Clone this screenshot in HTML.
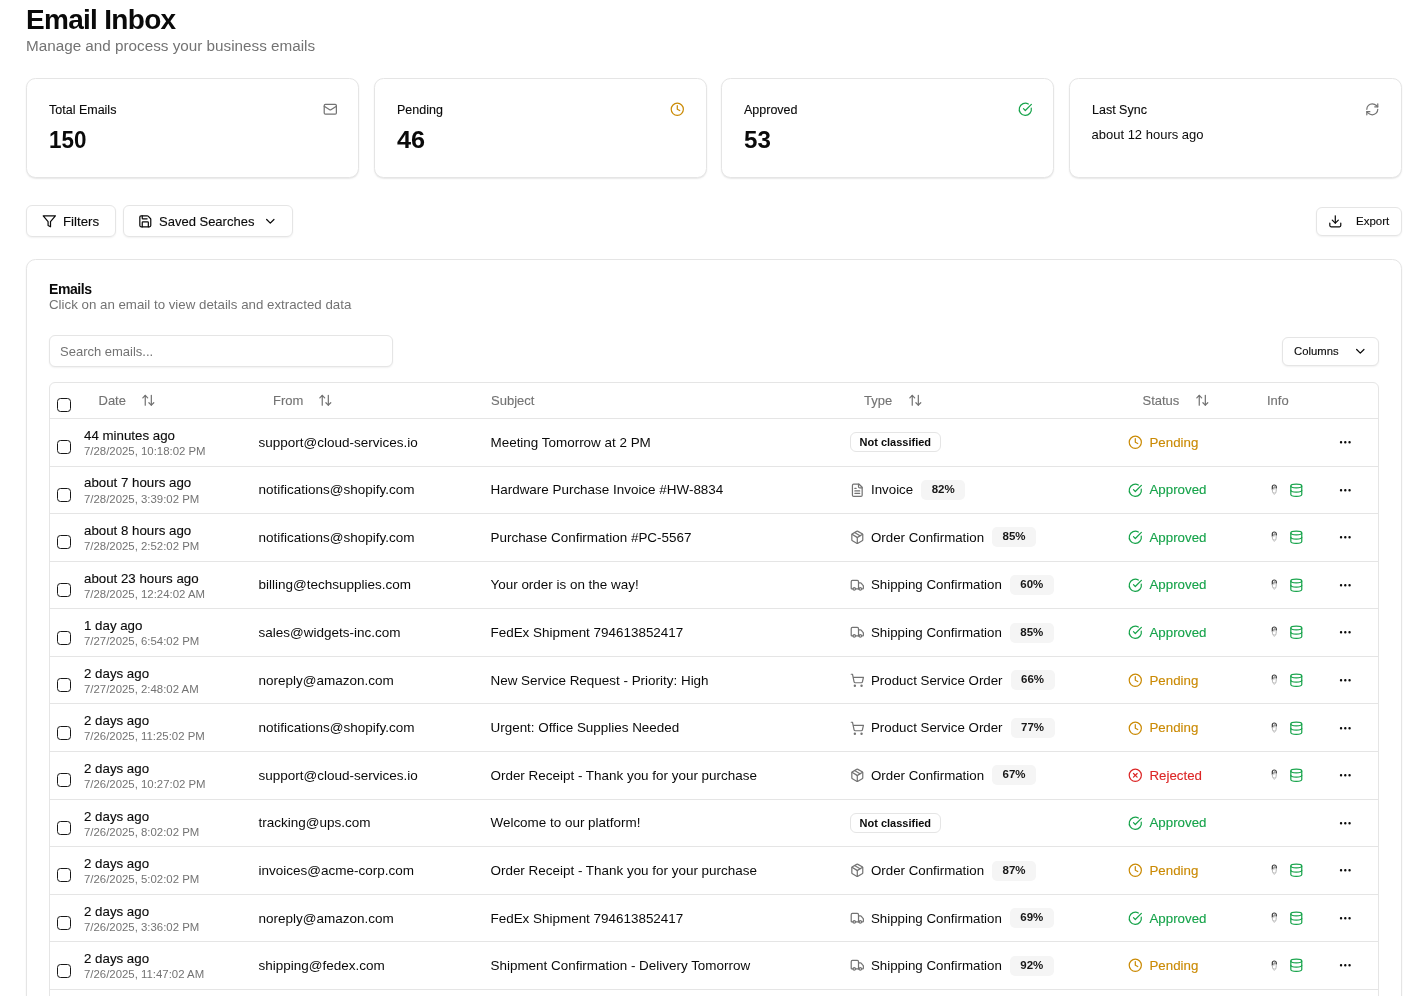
<!DOCTYPE html>
<html><head><meta charset="utf-8"><title>Email Inbox</title>
<style>
html,body{margin:0;padding:0;background:#ffffff;width:1415px;height:996px;overflow:hidden;}
body{position:relative;font-family:"Liberation Sans", sans-serif;}
#w{position:absolute;left:0;top:0;width:1415px;height:996px;overflow:hidden;will-change:transform;}
.t{position:absolute;white-space:nowrap;}
.m{-webkit-text-stroke:0.12px currentColor;}
.i{position:absolute;display:block;overflow:visible;}
.b{position:absolute;box-sizing:border-box;}
.card{position:absolute;box-sizing:border-box;border:1px solid #e5e5e5;border-radius:9.5px;background:#fff;box-shadow:0 1px 2px rgba(0,0,0,0.07),0 1px 1px rgba(0,0,0,0.03);}
.btn{position:absolute;box-sizing:border-box;border:1px solid #e5e5e5;border-radius:6px;background:#fff;box-shadow:0 1px 2px rgba(0,0,0,0.06);}
.cb{position:absolute;box-sizing:border-box;width:14px;height:14px;border:1px solid #171717;border-radius:3.5px;background:#fff;}
.hl{position:absolute;left:50px;width:1328px;height:1px;background:#e5e5e5;}
.pct{position:absolute;box-sizing:border-box;height:20px;line-height:18px;padding:0 10.5px;border-radius:5px;background:#f5f5f5;font-size:11.5px;font-weight:700;color:#171717;}
</style></head><body><div id="w">

<div class="t " style="left:26px;top:6px;font-size:28px;line-height:28px;color:#0a0a0a;font-weight:700;letter-spacing:-0.7px;">Email Inbox</div>
<div class="t " style="left:26px;top:38px;font-size:15.25px;line-height:15.25px;color:#737373;">Manage and process your business emails</div>
<div class="card" style="left:26px;top:78px;width:333px;height:100px"></div>
<div class="t m" style="left:49px;top:104px;font-size:12.5px;line-height:12.5px;color:#0a0a0a;">Total Emails</div>
<div class="t " style="left:49px;top:129px;font-size:23px;line-height:23px;color:#0a0a0a;font-weight:700;transform-origin:0 0;transform:scaleX(0.975);">150</div>
<svg class="i" style="left:323px;top:102px;width:14.6px;height:14.6px" viewBox="0 0 24 24" fill="none" stroke="#737373" stroke-width="2" stroke-linecap="round" stroke-linejoin="round"><rect width="20" height="16" x="2" y="4" rx="2"/><path d="m22 7-8.97 5.7a1.94 1.94 0 0 1-2.06 0L2 7"/></svg>
<div class="card" style="left:374px;top:78px;width:333px;height:100px"></div>
<div class="t m" style="left:397px;top:104px;font-size:12.5px;line-height:12.5px;color:#0a0a0a;">Pending</div>
<div class="t " style="left:397px;top:129px;font-size:23px;line-height:23px;color:#0a0a0a;font-weight:700;transform-origin:0 0;transform:scaleX(1.1);">46</div>
<svg class="i" style="left:670px;top:102px;width:14.6px;height:14.6px" viewBox="0 0 24 24" fill="none" stroke="#ca8a04" stroke-width="2" stroke-linecap="round" stroke-linejoin="round"><circle cx="12" cy="12" r="10"/><polyline points="12 6 12 12 16 14"/></svg>
<div class="card" style="left:721px;top:78px;width:333px;height:100px"></div>
<div class="t m" style="left:744px;top:104px;font-size:12.5px;line-height:12.5px;color:#0a0a0a;">Approved</div>
<div class="t " style="left:744px;top:129px;font-size:23px;line-height:23px;color:#0a0a0a;font-weight:700;transform-origin:0 0;transform:scaleX(1.05);">53</div>
<svg class="i" style="left:1017.6px;top:102px;width:14.6px;height:14.6px" viewBox="0 0 24 24" fill="none" stroke="#16a34a" stroke-width="2" stroke-linecap="round" stroke-linejoin="round"><path d="M21.801 10A10 10 0 1 1 17 3.335"/><path d="m9 11 3 3L22 4"/></svg>
<div class="card" style="left:1069px;top:78px;width:333px;height:100px"></div>
<div class="t m" style="left:1092px;top:104px;font-size:12.5px;line-height:12.5px;color:#0a0a0a;">Last Sync</div>
<div class="t " style="left:1091.5px;top:128px;font-size:13px;line-height:13px;color:#0a0a0a;">about 12 hours ago</div>
<svg class="i" style="left:1364.5px;top:101.5px;width:14.6px;height:14.6px" viewBox="0 0 24 24" fill="none" stroke="#737373" stroke-width="2" stroke-linecap="round" stroke-linejoin="round"><path d="M3 12a9 9 0 0 1 9-9 9.75 9.75 0 0 1 6.74 2.74L21 8"/><path d="M21 3v5h-5"/><path d="M21 12a9 9 0 0 1-9 9 9.75 9.75 0 0 1-6.74-2.74L3 16"/><path d="M8 16H3v5"/></svg>
<div class="btn" style="left:26px;top:205px;width:90px;height:32px"></div>
<svg class="i" style="left:42px;top:214px;width:14.6px;height:14.6px" viewBox="0 0 24 24" fill="none" stroke="#0a0a0a" stroke-width="2" stroke-linecap="round" stroke-linejoin="round"><polygon points="22 3 2 3 10 12.46 10 19 14 21 14 12.46 22 3"/></svg>
<div class="t m" style="left:63px;top:215px;font-size:13.3px;line-height:13.3px;color:#0a0a0a;">Filters</div>
<div class="btn" style="left:123px;top:205px;width:170px;height:32px"></div>
<svg class="i" style="left:138px;top:214px;width:14.6px;height:14.6px" viewBox="0 0 24 24" fill="none" stroke="#0a0a0a" stroke-width="2" stroke-linecap="round" stroke-linejoin="round"><path d="M15.2 3a2 2 0 0 1 1.4.6l3.8 3.8a2 2 0 0 1 .6 1.4V19a2 2 0 0 1-2 2H5a2 2 0 0 1-2-2V5a2 2 0 0 1 2-2z"/><path d="M17 21v-7a1 1 0 0 0-1-1H8a1 1 0 0 0-1 1v7"/><path d="M7 3v4a1 1 0 0 0 1 1h7"/></svg>
<div class="t m" style="left:159px;top:215px;font-size:13px;line-height:13px;color:#0a0a0a;">Saved Searches</div>
<svg class="i" style="left:263px;top:214px;width:14.6px;height:14.6px" viewBox="0 0 24 24" fill="none" stroke="#0a0a0a" stroke-width="2" stroke-linecap="round" stroke-linejoin="round"><path d="m6 9 6 6 6-6"/></svg>
<div class="btn" style="left:1316px;top:207px;width:86px;height:29px"></div>
<svg class="i" style="left:1328px;top:214px;width:14.6px;height:14.6px" viewBox="0 0 24 24" fill="none" stroke="#0a0a0a" stroke-width="2" stroke-linecap="round" stroke-linejoin="round"><path d="M21 15v4a2 2 0 0 1-2 2H5a2 2 0 0 1-2-2v-4"/><polyline points="7 10 12 15 17 10"/><line x1="12" x2="12" y1="15" y2="3"/></svg>
<div class="t m" style="left:1356px;top:216px;font-size:11.5px;line-height:11.5px;color:#0a0a0a;">Export</div>
<div class="card" style="left:26px;top:259px;width:1376px;height:800px"></div>
<div class="t " style="left:49px;top:282px;font-size:14px;line-height:14px;color:#0a0a0a;font-weight:700;letter-spacing:-0.4px;">Emails</div>
<div class="t " style="left:49px;top:298px;font-size:13.3px;line-height:13.3px;color:#737373;">Click on an email to view details and extracted data</div>
<div class="btn" style="left:49px;top:335px;width:344px;height:32px"></div>
<div class="t " style="left:60px;top:345px;font-size:13px;line-height:13px;color:#737373;">Search emails...</div>
<div class="btn" style="left:1282px;top:337px;width:97px;height:29px"></div>
<div class="t m" style="left:1294px;top:346px;font-size:11.3px;line-height:11.3px;color:#0a0a0a;">Columns</div>
<svg class="i" style="left:1353px;top:344px;width:14.6px;height:14.6px" viewBox="0 0 24 24" fill="none" stroke="#0a0a0a" stroke-width="2" stroke-linecap="round" stroke-linejoin="round"><path d="m6 9 6 6 6-6"/></svg>
<div class="b" style="left:49px;top:382px;width:1330px;height:700px;border:1px solid #e5e5e5;border-radius:6px"></div>
<div class="cb" style="left:57px;top:398px"></div>
<div class="t m" style="left:98.5px;top:394px;font-size:13px;line-height:13px;color:#737373;">Date</div>
<svg class="i" style="left:141px;top:393px;width:14.6px;height:14.6px" viewBox="0 0 24 24" fill="none" stroke="#737373" stroke-width="2" stroke-linecap="round" stroke-linejoin="round"><path d="m21 16-4 4-4-4"/><path d="M17 20V4"/><path d="m3 8 4-4 4 4"/><path d="M7 4v16"/></svg>
<div class="t m" style="left:273px;top:394px;font-size:13px;line-height:13px;color:#737373;">From</div>
<svg class="i" style="left:317.7px;top:393px;width:14.6px;height:14.6px" viewBox="0 0 24 24" fill="none" stroke="#737373" stroke-width="2" stroke-linecap="round" stroke-linejoin="round"><path d="m21 16-4 4-4-4"/><path d="M17 20V4"/><path d="m3 8 4-4 4 4"/><path d="M7 4v16"/></svg>
<div class="t m" style="left:491px;top:394px;font-size:13px;line-height:13px;color:#737373;">Subject</div>
<div class="t m" style="left:864px;top:394px;font-size:13px;line-height:13px;color:#737373;">Type</div>
<svg class="i" style="left:907.8px;top:393px;width:14.6px;height:14.6px" viewBox="0 0 24 24" fill="none" stroke="#737373" stroke-width="2" stroke-linecap="round" stroke-linejoin="round"><path d="m21 16-4 4-4-4"/><path d="M17 20V4"/><path d="m3 8 4-4 4 4"/><path d="M7 4v16"/></svg>
<div class="t m" style="left:1142.5px;top:394px;font-size:13px;line-height:13px;color:#737373;">Status</div>
<svg class="i" style="left:1194.7px;top:393px;width:14.6px;height:14.6px" viewBox="0 0 24 24" fill="none" stroke="#737373" stroke-width="2" stroke-linecap="round" stroke-linejoin="round"><path d="m21 16-4 4-4-4"/><path d="M17 20V4"/><path d="m3 8 4-4 4 4"/><path d="M7 4v16"/></svg>
<div class="t m" style="left:1267px;top:394px;font-size:13px;line-height:13px;color:#737373;">Info</div>
<div class="hl" style="top:418px"></div>
<div class="cb" style="top:440px;left:57px"></div>
<div class="t m" style="left:84px;top:429px;font-size:13.3px;line-height:13.3px;color:#0a0a0a;">44 minutes ago</div>
<div class="t " style="left:84px;top:446px;font-size:11.4px;line-height:11.4px;color:#737373;">7/28/2025, 10:18:02 PM</div>
<div class="t " style="left:258.5px;top:436px;font-size:13.5px;line-height:13.5px;color:#0a0a0a;">support@cloud-services.io</div>
<div class="t " style="left:490.5px;top:436px;font-size:13.45px;line-height:13.45px;color:#0a0a0a;">Meeting Tomorrow at 2 PM</div>
<div class="b" style="left:850px;top:432px;width:91px;height:20px;border:1px solid #e5e5e5;border-radius:6px"></div>
<div class="t " style="left:859.5px;top:437px;font-size:11px;line-height:11px;color:#0a0a0a;font-weight:700;">Not classified</div>
<svg class="i" style="left:1127.8px;top:435.0px;width:14.6px;height:14.6px" viewBox="0 0 24 24" fill="none" stroke="#ca8a04" stroke-width="2" stroke-linecap="round" stroke-linejoin="round"><circle cx="12" cy="12" r="10"/><polyline points="12 6 12 12 16 14"/></svg>
<div class="t m" style="left:1149.5px;top:436px;font-size:13.3px;line-height:13.3px;color:#ca8a04;">Pending</div>
<svg class="i" style="left:1337.7px;top:435.0px;width:14.6px;height:14.6px" viewBox="0 0 24 24" fill="#0a0a0a" stroke="#0a0a0a" stroke-width="2"><circle cx="12" cy="12" r="1"/><circle cx="19" cy="12" r="1"/><circle cx="5" cy="12" r="1"/></svg>
<div class="hl" style="top:466px"></div>
<div class="cb" style="top:488px;left:57px"></div>
<div class="t m" style="left:84px;top:476px;font-size:13.3px;line-height:13.3px;color:#0a0a0a;">about 7 hours ago</div>
<div class="t " style="left:84px;top:494px;font-size:11.4px;line-height:11.4px;color:#737373;">7/28/2025, 3:39:02 PM</div>
<div class="t " style="left:258.5px;top:483px;font-size:13.5px;line-height:13.5px;color:#0a0a0a;">notifications@shopify.com</div>
<div class="t " style="left:490.5px;top:483px;font-size:13.45px;line-height:13.45px;color:#0a0a0a;">Hardware Purchase Invoice #HW-8834</div>
<svg class="i" style="left:850px;top:482.6px;width:14.6px;height:14.6px" viewBox="0 0 24 24" fill="none" stroke="#737373" stroke-width="2" stroke-linecap="round" stroke-linejoin="round"><path d="M15 2H6a2 2 0 0 0-2 2v16a2 2 0 0 0 2 2h12a2 2 0 0 0 2-2V7Z"/><path d="M14 2v4a2 2 0 0 0 2 2h4"/><path d="M10 9H8"/><path d="M16 13H8"/><path d="M16 17H8"/></svg>
<div class="t" style="left:871px;top:483px;font-size:13.3px;line-height:13.3px;color:#0a0a0a">Invoice<span class="pct" style="left:100%;margin-left:8px;top:-3.13px">82%</span></div>
<svg class="i" style="left:1127.8px;top:482.6px;width:14.6px;height:14.6px" viewBox="0 0 24 24" fill="none" stroke="#16a34a" stroke-width="2" stroke-linecap="round" stroke-linejoin="round"><path d="M21.801 10A10 10 0 1 1 17 3.335"/><path d="m9 11 3 3L22 4"/></svg>
<div class="t m" style="left:1149.5px;top:483px;font-size:13.3px;line-height:13.3px;color:#16a34a;">Approved</div>
<svg class="i" style="left:1288.8px;top:482.6px;width:14.6px;height:14.6px" viewBox="0 0 24 24" fill="none" stroke="#16a34a" stroke-width="2" stroke-linecap="round" stroke-linejoin="round"><ellipse cx="12" cy="5" rx="9" ry="3"/><path d="M3 5V19A9 3 0 0 0 21 19V5"/><path d="M3 12A9 3 0 0 0 21 12"/></svg>
<svg class="i" style="left:1337.7px;top:482.6px;width:14.6px;height:14.6px" viewBox="0 0 24 24" fill="#0a0a0a" stroke="#0a0a0a" stroke-width="2"><circle cx="12" cy="12" r="1"/><circle cx="19" cy="12" r="1"/><circle cx="5" cy="12" r="1"/></svg>
<svg class="i" style="left:1271px;top:483.7px;width:7px;height:12px" viewBox="0 0 7 12" fill="none" stroke-linecap="round" stroke-linejoin="round"><path d="M1.3 5.2 V3 A2 2 0 0 1 5.3 3 V4.2" stroke="#3a3a3a" stroke-width="1.2"/><path d="M2.9 5 V3.4 A0.6 0.6 0 0 1 4.1 3.4" stroke="#666" stroke-width="0.9"/><path d="M1.4 5.4 V7.2 A1.9 1.9 0 0 0 5.2 7.2 V4.6" stroke="#b5b5b5" stroke-width="1"/><path d="M1.8 8.8 L3.3 10.6 L4.8 8.8" stroke="#c8c8c8" stroke-width="0.9"/></svg>
<div class="hl" style="top:513px"></div>
<div class="cb" style="top:535px;left:57px"></div>
<div class="t m" style="left:84px;top:524px;font-size:13.3px;line-height:13.3px;color:#0a0a0a;">about 8 hours ago</div>
<div class="t " style="left:84px;top:541px;font-size:11.4px;line-height:11.4px;color:#737373;">7/28/2025, 2:52:02 PM</div>
<div class="t " style="left:258.5px;top:531px;font-size:13.5px;line-height:13.5px;color:#0a0a0a;">notifications@shopify.com</div>
<div class="t " style="left:490.5px;top:531px;font-size:13.45px;line-height:13.45px;color:#0a0a0a;">Purchase Confirmation #PC-5567</div>
<svg class="i" style="left:850px;top:530.1px;width:14.6px;height:14.6px" viewBox="0 0 24 24" fill="none" stroke="#737373" stroke-width="2" stroke-linecap="round" stroke-linejoin="round"><path d="M11 21.73a2 2 0 0 0 2 0l7-4A2 2 0 0 0 21 16V8a2 2 0 0 0-1-1.73l-7-4a2 2 0 0 0-2 0l-7 4A2 2 0 0 0 3 8v8a2 2 0 0 0 1 1.730z"/><path d="M12 22V12"/><path d="m3.3 7 7.703 4.734a2 2 0 0 0 1.994 0L20.7 7"/><path d="m7.5 4.27 9 5.15"/></svg>
<div class="t" style="left:871px;top:531px;font-size:13.3px;line-height:13.3px;color:#0a0a0a">Order Confirmation<span class="pct" style="left:100%;margin-left:8px;top:-3.55px">85%</span></div>
<svg class="i" style="left:1127.8px;top:530.1px;width:14.6px;height:14.6px" viewBox="0 0 24 24" fill="none" stroke="#16a34a" stroke-width="2" stroke-linecap="round" stroke-linejoin="round"><path d="M21.801 10A10 10 0 1 1 17 3.335"/><path d="m9 11 3 3L22 4"/></svg>
<div class="t m" style="left:1149.5px;top:531px;font-size:13.3px;line-height:13.3px;color:#16a34a;">Approved</div>
<svg class="i" style="left:1288.8px;top:530.1px;width:14.6px;height:14.6px" viewBox="0 0 24 24" fill="none" stroke="#16a34a" stroke-width="2" stroke-linecap="round" stroke-linejoin="round"><ellipse cx="12" cy="5" rx="9" ry="3"/><path d="M3 5V19A9 3 0 0 0 21 19V5"/><path d="M3 12A9 3 0 0 0 21 12"/></svg>
<svg class="i" style="left:1337.7px;top:530.1px;width:14.6px;height:14.6px" viewBox="0 0 24 24" fill="#0a0a0a" stroke="#0a0a0a" stroke-width="2"><circle cx="12" cy="12" r="1"/><circle cx="19" cy="12" r="1"/><circle cx="5" cy="12" r="1"/></svg>
<svg class="i" style="left:1271px;top:531.2px;width:7px;height:12px" viewBox="0 0 7 12" fill="none" stroke-linecap="round" stroke-linejoin="round"><path d="M1.3 5.2 V3 A2 2 0 0 1 5.3 3 V4.2" stroke="#3a3a3a" stroke-width="1.2"/><path d="M2.9 5 V3.4 A0.6 0.6 0 0 1 4.1 3.4" stroke="#666" stroke-width="0.9"/><path d="M1.4 5.4 V7.2 A1.9 1.9 0 0 0 5.2 7.2 V4.6" stroke="#b5b5b5" stroke-width="1"/><path d="M1.8 8.8 L3.3 10.6 L4.8 8.8" stroke="#c8c8c8" stroke-width="0.9"/></svg>
<div class="hl" style="top:561px"></div>
<div class="cb" style="top:583px;left:57px"></div>
<div class="t m" style="left:84px;top:572px;font-size:13.3px;line-height:13.3px;color:#0a0a0a;">about 23 hours ago</div>
<div class="t " style="left:84px;top:589px;font-size:11.4px;line-height:11.4px;color:#737373;">7/28/2025, 12:24:02 AM</div>
<div class="t " style="left:258.5px;top:578px;font-size:13.5px;line-height:13.5px;color:#0a0a0a;">billing@techsupplies.com</div>
<div class="t " style="left:490.5px;top:578px;font-size:13.45px;line-height:13.45px;color:#0a0a0a;">Your order is on the way!</div>
<svg class="i" style="left:850px;top:577.7px;width:14.6px;height:14.6px" viewBox="0 0 24 24" fill="none" stroke="#737373" stroke-width="2" stroke-linecap="round" stroke-linejoin="round"><path d="M14 18V6a2 2 0 0 0-2-2H4a2 2 0 0 0-2 2v11a1 1 0 0 0 1 1h2"/><path d="M15 18H9"/><path d="M19 18h2a1 1 0 0 0 1-1v-3.650a1 1 0 0 0-.22-.624l-3.48-4.35A1 1 0 0 0 17.52 8H14"/><circle cx="17" cy="18" r="2"/><circle cx="7" cy="18" r="2"/></svg>
<div class="t" style="left:871px;top:578px;font-size:13.3px;line-height:13.3px;color:#0a0a0a">Shipping Confirmation<span class="pct" style="left:100%;margin-left:8px;top:-2.97px">60%</span></div>
<svg class="i" style="left:1127.8px;top:577.7px;width:14.6px;height:14.6px" viewBox="0 0 24 24" fill="none" stroke="#16a34a" stroke-width="2" stroke-linecap="round" stroke-linejoin="round"><path d="M21.801 10A10 10 0 1 1 17 3.335"/><path d="m9 11 3 3L22 4"/></svg>
<div class="t m" style="left:1149.5px;top:578px;font-size:13.3px;line-height:13.3px;color:#16a34a;">Approved</div>
<svg class="i" style="left:1288.8px;top:577.7px;width:14.6px;height:14.6px" viewBox="0 0 24 24" fill="none" stroke="#16a34a" stroke-width="2" stroke-linecap="round" stroke-linejoin="round"><ellipse cx="12" cy="5" rx="9" ry="3"/><path d="M3 5V19A9 3 0 0 0 21 19V5"/><path d="M3 12A9 3 0 0 0 21 12"/></svg>
<svg class="i" style="left:1337.7px;top:577.7px;width:14.6px;height:14.6px" viewBox="0 0 24 24" fill="#0a0a0a" stroke="#0a0a0a" stroke-width="2"><circle cx="12" cy="12" r="1"/><circle cx="19" cy="12" r="1"/><circle cx="5" cy="12" r="1"/></svg>
<svg class="i" style="left:1271px;top:578.8px;width:7px;height:12px" viewBox="0 0 7 12" fill="none" stroke-linecap="round" stroke-linejoin="round"><path d="M1.3 5.2 V3 A2 2 0 0 1 5.3 3 V4.2" stroke="#3a3a3a" stroke-width="1.2"/><path d="M2.9 5 V3.4 A0.6 0.6 0 0 1 4.1 3.4" stroke="#666" stroke-width="0.9"/><path d="M1.4 5.4 V7.2 A1.9 1.9 0 0 0 5.2 7.2 V4.6" stroke="#b5b5b5" stroke-width="1"/><path d="M1.8 8.8 L3.3 10.6 L4.8 8.8" stroke="#c8c8c8" stroke-width="0.9"/></svg>
<div class="hl" style="top:608px"></div>
<div class="cb" style="top:631px;left:57px"></div>
<div class="t m" style="left:84px;top:619px;font-size:13.3px;line-height:13.3px;color:#0a0a0a;">1 day ago</div>
<div class="t " style="left:84px;top:636px;font-size:11.4px;line-height:11.4px;color:#737373;">7/27/2025, 6:54:02 PM</div>
<div class="t " style="left:258.5px;top:626px;font-size:13.5px;line-height:13.5px;color:#0a0a0a;">sales@widgets-inc.com</div>
<div class="t " style="left:490.5px;top:626px;font-size:13.45px;line-height:13.45px;color:#0a0a0a;">FedEx Shipment 794613852417</div>
<svg class="i" style="left:850px;top:625.3px;width:14.6px;height:14.6px" viewBox="0 0 24 24" fill="none" stroke="#737373" stroke-width="2" stroke-linecap="round" stroke-linejoin="round"><path d="M14 18V6a2 2 0 0 0-2-2H4a2 2 0 0 0-2 2v11a1 1 0 0 0 1 1h2"/><path d="M15 18H9"/><path d="M19 18h2a1 1 0 0 0 1-1v-3.650a1 1 0 0 0-.22-.624l-3.48-4.35A1 1 0 0 0 17.52 8H14"/><circle cx="17" cy="18" r="2"/><circle cx="7" cy="18" r="2"/></svg>
<div class="t" style="left:871px;top:626px;font-size:13.3px;line-height:13.3px;color:#0a0a0a">Shipping Confirmation<span class="pct" style="left:100%;margin-left:8px;top:-3.39px">85%</span></div>
<svg class="i" style="left:1127.8px;top:625.3px;width:14.6px;height:14.6px" viewBox="0 0 24 24" fill="none" stroke="#16a34a" stroke-width="2" stroke-linecap="round" stroke-linejoin="round"><path d="M21.801 10A10 10 0 1 1 17 3.335"/><path d="m9 11 3 3L22 4"/></svg>
<div class="t m" style="left:1149.5px;top:626px;font-size:13.3px;line-height:13.3px;color:#16a34a;">Approved</div>
<svg class="i" style="left:1288.8px;top:625.3px;width:14.6px;height:14.6px" viewBox="0 0 24 24" fill="none" stroke="#16a34a" stroke-width="2" stroke-linecap="round" stroke-linejoin="round"><ellipse cx="12" cy="5" rx="9" ry="3"/><path d="M3 5V19A9 3 0 0 0 21 19V5"/><path d="M3 12A9 3 0 0 0 21 12"/></svg>
<svg class="i" style="left:1337.7px;top:625.3px;width:14.6px;height:14.6px" viewBox="0 0 24 24" fill="#0a0a0a" stroke="#0a0a0a" stroke-width="2"><circle cx="12" cy="12" r="1"/><circle cx="19" cy="12" r="1"/><circle cx="5" cy="12" r="1"/></svg>
<svg class="i" style="left:1271px;top:626.4px;width:7px;height:12px" viewBox="0 0 7 12" fill="none" stroke-linecap="round" stroke-linejoin="round"><path d="M1.3 5.2 V3 A2 2 0 0 1 5.3 3 V4.2" stroke="#3a3a3a" stroke-width="1.2"/><path d="M2.9 5 V3.4 A0.6 0.6 0 0 1 4.1 3.4" stroke="#666" stroke-width="0.9"/><path d="M1.4 5.4 V7.2 A1.9 1.9 0 0 0 5.2 7.2 V4.6" stroke="#b5b5b5" stroke-width="1"/><path d="M1.8 8.8 L3.3 10.6 L4.8 8.8" stroke="#c8c8c8" stroke-width="0.9"/></svg>
<div class="hl" style="top:656px"></div>
<div class="cb" style="top:678px;left:57px"></div>
<div class="t m" style="left:84px;top:667px;font-size:13.3px;line-height:13.3px;color:#0a0a0a;">2 days ago</div>
<div class="t " style="left:84px;top:684px;font-size:11.4px;line-height:11.4px;color:#737373;">7/27/2025, 2:48:02 AM</div>
<div class="t " style="left:258.5px;top:674px;font-size:13.5px;line-height:13.5px;color:#0a0a0a;">noreply@amazon.com</div>
<div class="t " style="left:490.5px;top:674px;font-size:13.45px;line-height:13.45px;color:#0a0a0a;">New Service Request - Priority: High</div>
<svg class="i" style="left:850px;top:672.9px;width:14.6px;height:14.6px" viewBox="0 0 24 24" fill="none" stroke="#737373" stroke-width="2" stroke-linecap="round" stroke-linejoin="round"><circle cx="8" cy="21" r="1"/><circle cx="19" cy="21" r="1"/><path d="M2.05 2.05h2l2.66 12.42a2 2 0 0 0 2 1.58h9.78a2 2 0 0 0 1.95-1.57l1.65-7.43H5.12"/></svg>
<div class="t" style="left:871px;top:674px;font-size:13.3px;line-height:13.3px;color:#0a0a0a">Product Service Order<span class="pct" style="left:100%;margin-left:8px;top:-3.81px">66%</span></div>
<svg class="i" style="left:1127.8px;top:672.9px;width:14.6px;height:14.6px" viewBox="0 0 24 24" fill="none" stroke="#ca8a04" stroke-width="2" stroke-linecap="round" stroke-linejoin="round"><circle cx="12" cy="12" r="10"/><polyline points="12 6 12 12 16 14"/></svg>
<div class="t m" style="left:1149.5px;top:674px;font-size:13.3px;line-height:13.3px;color:#ca8a04;">Pending</div>
<svg class="i" style="left:1288.8px;top:672.9px;width:14.6px;height:14.6px" viewBox="0 0 24 24" fill="none" stroke="#16a34a" stroke-width="2" stroke-linecap="round" stroke-linejoin="round"><ellipse cx="12" cy="5" rx="9" ry="3"/><path d="M3 5V19A9 3 0 0 0 21 19V5"/><path d="M3 12A9 3 0 0 0 21 12"/></svg>
<svg class="i" style="left:1337.7px;top:672.9px;width:14.6px;height:14.6px" viewBox="0 0 24 24" fill="#0a0a0a" stroke="#0a0a0a" stroke-width="2"><circle cx="12" cy="12" r="1"/><circle cx="19" cy="12" r="1"/><circle cx="5" cy="12" r="1"/></svg>
<svg class="i" style="left:1271px;top:674.0px;width:7px;height:12px" viewBox="0 0 7 12" fill="none" stroke-linecap="round" stroke-linejoin="round"><path d="M1.3 5.2 V3 A2 2 0 0 1 5.3 3 V4.2" stroke="#3a3a3a" stroke-width="1.2"/><path d="M2.9 5 V3.4 A0.6 0.6 0 0 1 4.1 3.4" stroke="#666" stroke-width="0.9"/><path d="M1.4 5.4 V7.2 A1.9 1.9 0 0 0 5.2 7.2 V4.6" stroke="#b5b5b5" stroke-width="1"/><path d="M1.8 8.8 L3.3 10.6 L4.8 8.8" stroke="#c8c8c8" stroke-width="0.9"/></svg>
<div class="hl" style="top:703px"></div>
<div class="cb" style="top:726px;left:57px"></div>
<div class="t m" style="left:84px;top:714px;font-size:13.3px;line-height:13.3px;color:#0a0a0a;">2 days ago</div>
<div class="t " style="left:84px;top:731px;font-size:11.4px;line-height:11.4px;color:#737373;">7/26/2025, 11:25:02 PM</div>
<div class="t " style="left:258.5px;top:721px;font-size:13.5px;line-height:13.5px;color:#0a0a0a;">notifications@shopify.com</div>
<div class="t " style="left:490.5px;top:721px;font-size:13.45px;line-height:13.45px;color:#0a0a0a;">Urgent: Office Supplies Needed</div>
<svg class="i" style="left:850px;top:720.5px;width:14.6px;height:14.6px" viewBox="0 0 24 24" fill="none" stroke="#737373" stroke-width="2" stroke-linecap="round" stroke-linejoin="round"><circle cx="8" cy="21" r="1"/><circle cx="19" cy="21" r="1"/><path d="M2.05 2.05h2l2.66 12.42a2 2 0 0 0 2 1.58h9.78a2 2 0 0 0 1.95-1.57l1.65-7.43H5.12"/></svg>
<div class="t" style="left:871px;top:721px;font-size:13.3px;line-height:13.3px;color:#0a0a0a">Product Service Order<span class="pct" style="left:100%;margin-left:8px;top:-3.23px">77%</span></div>
<svg class="i" style="left:1127.8px;top:720.5px;width:14.6px;height:14.6px" viewBox="0 0 24 24" fill="none" stroke="#ca8a04" stroke-width="2" stroke-linecap="round" stroke-linejoin="round"><circle cx="12" cy="12" r="10"/><polyline points="12 6 12 12 16 14"/></svg>
<div class="t m" style="left:1149.5px;top:721px;font-size:13.3px;line-height:13.3px;color:#ca8a04;">Pending</div>
<svg class="i" style="left:1288.8px;top:720.5px;width:14.6px;height:14.6px" viewBox="0 0 24 24" fill="none" stroke="#16a34a" stroke-width="2" stroke-linecap="round" stroke-linejoin="round"><ellipse cx="12" cy="5" rx="9" ry="3"/><path d="M3 5V19A9 3 0 0 0 21 19V5"/><path d="M3 12A9 3 0 0 0 21 12"/></svg>
<svg class="i" style="left:1337.7px;top:720.5px;width:14.6px;height:14.6px" viewBox="0 0 24 24" fill="#0a0a0a" stroke="#0a0a0a" stroke-width="2"><circle cx="12" cy="12" r="1"/><circle cx="19" cy="12" r="1"/><circle cx="5" cy="12" r="1"/></svg>
<svg class="i" style="left:1271px;top:721.6px;width:7px;height:12px" viewBox="0 0 7 12" fill="none" stroke-linecap="round" stroke-linejoin="round"><path d="M1.3 5.2 V3 A2 2 0 0 1 5.3 3 V4.2" stroke="#3a3a3a" stroke-width="1.2"/><path d="M2.9 5 V3.4 A0.6 0.6 0 0 1 4.1 3.4" stroke="#666" stroke-width="0.9"/><path d="M1.4 5.4 V7.2 A1.9 1.9 0 0 0 5.2 7.2 V4.6" stroke="#b5b5b5" stroke-width="1"/><path d="M1.8 8.8 L3.3 10.6 L4.8 8.8" stroke="#c8c8c8" stroke-width="0.9"/></svg>
<div class="hl" style="top:751px"></div>
<div class="cb" style="top:773px;left:57px"></div>
<div class="t m" style="left:84px;top:762px;font-size:13.3px;line-height:13.3px;color:#0a0a0a;">2 days ago</div>
<div class="t " style="left:84px;top:779px;font-size:11.4px;line-height:11.4px;color:#737373;">7/26/2025, 10:27:02 PM</div>
<div class="t " style="left:258.5px;top:769px;font-size:13.5px;line-height:13.5px;color:#0a0a0a;">support@cloud-services.io</div>
<div class="t " style="left:490.5px;top:769px;font-size:13.45px;line-height:13.45px;color:#0a0a0a;">Order Receipt - Thank you for your purchase</div>
<svg class="i" style="left:850px;top:768.0px;width:14.6px;height:14.6px" viewBox="0 0 24 24" fill="none" stroke="#737373" stroke-width="2" stroke-linecap="round" stroke-linejoin="round"><path d="M11 21.73a2 2 0 0 0 2 0l7-4A2 2 0 0 0 21 16V8a2 2 0 0 0-1-1.73l-7-4a2 2 0 0 0-2 0l-7 4A2 2 0 0 0 3 8v8a2 2 0 0 0 1 1.730z"/><path d="M12 22V12"/><path d="m3.3 7 7.703 4.734a2 2 0 0 0 1.994 0L20.7 7"/><path d="m7.5 4.27 9 5.15"/></svg>
<div class="t" style="left:871px;top:769px;font-size:13.3px;line-height:13.3px;color:#0a0a0a">Order Confirmation<span class="pct" style="left:100%;margin-left:8px;top:-3.65px">67%</span></div>
<svg class="i" style="left:1127.8px;top:768.0px;width:14.6px;height:14.6px" viewBox="0 0 24 24" fill="none" stroke="#dc2626" stroke-width="2" stroke-linecap="round" stroke-linejoin="round"><circle cx="12" cy="12" r="10"/><path d="m15 9-6 6"/><path d="m9 9 6 6"/></svg>
<div class="t m" style="left:1149.5px;top:769px;font-size:13.3px;line-height:13.3px;color:#dc2626;">Rejected</div>
<svg class="i" style="left:1288.8px;top:768.0px;width:14.6px;height:14.6px" viewBox="0 0 24 24" fill="none" stroke="#16a34a" stroke-width="2" stroke-linecap="round" stroke-linejoin="round"><ellipse cx="12" cy="5" rx="9" ry="3"/><path d="M3 5V19A9 3 0 0 0 21 19V5"/><path d="M3 12A9 3 0 0 0 21 12"/></svg>
<svg class="i" style="left:1337.7px;top:768.0px;width:14.6px;height:14.6px" viewBox="0 0 24 24" fill="#0a0a0a" stroke="#0a0a0a" stroke-width="2"><circle cx="12" cy="12" r="1"/><circle cx="19" cy="12" r="1"/><circle cx="5" cy="12" r="1"/></svg>
<svg class="i" style="left:1271px;top:769.1px;width:7px;height:12px" viewBox="0 0 7 12" fill="none" stroke-linecap="round" stroke-linejoin="round"><path d="M1.3 5.2 V3 A2 2 0 0 1 5.3 3 V4.2" stroke="#3a3a3a" stroke-width="1.2"/><path d="M2.9 5 V3.4 A0.6 0.6 0 0 1 4.1 3.4" stroke="#666" stroke-width="0.9"/><path d="M1.4 5.4 V7.2 A1.9 1.9 0 0 0 5.2 7.2 V4.6" stroke="#b5b5b5" stroke-width="1"/><path d="M1.8 8.8 L3.3 10.6 L4.8 8.8" stroke="#c8c8c8" stroke-width="0.9"/></svg>
<div class="hl" style="top:799px"></div>
<div class="cb" style="top:821px;left:57px"></div>
<div class="t m" style="left:84px;top:810px;font-size:13.3px;line-height:13.3px;color:#0a0a0a;">2 days ago</div>
<div class="t " style="left:84px;top:827px;font-size:11.4px;line-height:11.4px;color:#737373;">7/26/2025, 8:02:02 PM</div>
<div class="t " style="left:258.5px;top:816px;font-size:13.5px;line-height:13.5px;color:#0a0a0a;">tracking@ups.com</div>
<div class="t " style="left:490.5px;top:816px;font-size:13.45px;line-height:13.45px;color:#0a0a0a;">Welcome to our platform!</div>
<div class="b" style="left:850px;top:813px;width:91px;height:20px;border:1px solid #e5e5e5;border-radius:6px"></div>
<div class="t " style="left:859.5px;top:818px;font-size:11px;line-height:11px;color:#0a0a0a;font-weight:700;">Not classified</div>
<svg class="i" style="left:1127.8px;top:815.6px;width:14.6px;height:14.6px" viewBox="0 0 24 24" fill="none" stroke="#16a34a" stroke-width="2" stroke-linecap="round" stroke-linejoin="round"><path d="M21.801 10A10 10 0 1 1 17 3.335"/><path d="m9 11 3 3L22 4"/></svg>
<div class="t m" style="left:1149.5px;top:816px;font-size:13.3px;line-height:13.3px;color:#16a34a;">Approved</div>
<svg class="i" style="left:1337.7px;top:815.6px;width:14.6px;height:14.6px" viewBox="0 0 24 24" fill="#0a0a0a" stroke="#0a0a0a" stroke-width="2"><circle cx="12" cy="12" r="1"/><circle cx="19" cy="12" r="1"/><circle cx="5" cy="12" r="1"/></svg>
<div class="hl" style="top:846px"></div>
<div class="cb" style="top:868px;left:57px"></div>
<div class="t m" style="left:84px;top:857px;font-size:13.3px;line-height:13.3px;color:#0a0a0a;">2 days ago</div>
<div class="t " style="left:84px;top:874px;font-size:11.4px;line-height:11.4px;color:#737373;">7/26/2025, 5:02:02 PM</div>
<div class="t " style="left:258.5px;top:864px;font-size:13.5px;line-height:13.5px;color:#0a0a0a;">invoices@acme-corp.com</div>
<div class="t " style="left:490.5px;top:864px;font-size:13.45px;line-height:13.45px;color:#0a0a0a;">Order Receipt - Thank you for your purchase</div>
<svg class="i" style="left:850px;top:863.2px;width:14.6px;height:14.6px" viewBox="0 0 24 24" fill="none" stroke="#737373" stroke-width="2" stroke-linecap="round" stroke-linejoin="round"><path d="M11 21.73a2 2 0 0 0 2 0l7-4A2 2 0 0 0 21 16V8a2 2 0 0 0-1-1.73l-7-4a2 2 0 0 0-2 0l-7 4A2 2 0 0 0 3 8v8a2 2 0 0 0 1 1.730z"/><path d="M12 22V12"/><path d="m3.3 7 7.703 4.734a2 2 0 0 0 1.994 0L20.7 7"/><path d="m7.5 4.27 9 5.15"/></svg>
<div class="t" style="left:871px;top:864px;font-size:13.3px;line-height:13.3px;color:#0a0a0a">Order Confirmation<span class="pct" style="left:100%;margin-left:8px;top:-3.49px">87%</span></div>
<svg class="i" style="left:1127.8px;top:863.2px;width:14.6px;height:14.6px" viewBox="0 0 24 24" fill="none" stroke="#ca8a04" stroke-width="2" stroke-linecap="round" stroke-linejoin="round"><circle cx="12" cy="12" r="10"/><polyline points="12 6 12 12 16 14"/></svg>
<div class="t m" style="left:1149.5px;top:864px;font-size:13.3px;line-height:13.3px;color:#ca8a04;">Pending</div>
<svg class="i" style="left:1288.8px;top:863.2px;width:14.6px;height:14.6px" viewBox="0 0 24 24" fill="none" stroke="#16a34a" stroke-width="2" stroke-linecap="round" stroke-linejoin="round"><ellipse cx="12" cy="5" rx="9" ry="3"/><path d="M3 5V19A9 3 0 0 0 21 19V5"/><path d="M3 12A9 3 0 0 0 21 12"/></svg>
<svg class="i" style="left:1337.7px;top:863.2px;width:14.6px;height:14.6px" viewBox="0 0 24 24" fill="#0a0a0a" stroke="#0a0a0a" stroke-width="2"><circle cx="12" cy="12" r="1"/><circle cx="19" cy="12" r="1"/><circle cx="5" cy="12" r="1"/></svg>
<svg class="i" style="left:1271px;top:864.3px;width:7px;height:12px" viewBox="0 0 7 12" fill="none" stroke-linecap="round" stroke-linejoin="round"><path d="M1.3 5.2 V3 A2 2 0 0 1 5.3 3 V4.2" stroke="#3a3a3a" stroke-width="1.2"/><path d="M2.9 5 V3.4 A0.6 0.6 0 0 1 4.1 3.4" stroke="#666" stroke-width="0.9"/><path d="M1.4 5.4 V7.2 A1.9 1.9 0 0 0 5.2 7.2 V4.6" stroke="#b5b5b5" stroke-width="1"/><path d="M1.8 8.8 L3.3 10.6 L4.8 8.8" stroke="#c8c8c8" stroke-width="0.9"/></svg>
<div class="hl" style="top:894px"></div>
<div class="cb" style="top:916px;left:57px"></div>
<div class="t m" style="left:84px;top:905px;font-size:13.3px;line-height:13.3px;color:#0a0a0a;">2 days ago</div>
<div class="t " style="left:84px;top:922px;font-size:11.4px;line-height:11.4px;color:#737373;">7/26/2025, 3:36:02 PM</div>
<div class="t " style="left:258.5px;top:912px;font-size:13.5px;line-height:13.5px;color:#0a0a0a;">noreply@amazon.com</div>
<div class="t " style="left:490.5px;top:912px;font-size:13.45px;line-height:13.45px;color:#0a0a0a;">FedEx Shipment 794613852417</div>
<svg class="i" style="left:850px;top:910.8px;width:14.6px;height:14.6px" viewBox="0 0 24 24" fill="none" stroke="#737373" stroke-width="2" stroke-linecap="round" stroke-linejoin="round"><path d="M14 18V6a2 2 0 0 0-2-2H4a2 2 0 0 0-2 2v11a1 1 0 0 0 1 1h2"/><path d="M15 18H9"/><path d="M19 18h2a1 1 0 0 0 1-1v-3.650a1 1 0 0 0-.22-.624l-3.48-4.35A1 1 0 0 0 17.52 8H14"/><circle cx="17" cy="18" r="2"/><circle cx="7" cy="18" r="2"/></svg>
<div class="t" style="left:871px;top:912px;font-size:13.3px;line-height:13.3px;color:#0a0a0a">Shipping Confirmation<span class="pct" style="left:100%;margin-left:8px;top:-3.91px">69%</span></div>
<svg class="i" style="left:1127.8px;top:910.8px;width:14.6px;height:14.6px" viewBox="0 0 24 24" fill="none" stroke="#16a34a" stroke-width="2" stroke-linecap="round" stroke-linejoin="round"><path d="M21.801 10A10 10 0 1 1 17 3.335"/><path d="m9 11 3 3L22 4"/></svg>
<div class="t m" style="left:1149.5px;top:912px;font-size:13.3px;line-height:13.3px;color:#16a34a;">Approved</div>
<svg class="i" style="left:1288.8px;top:910.8px;width:14.6px;height:14.6px" viewBox="0 0 24 24" fill="none" stroke="#16a34a" stroke-width="2" stroke-linecap="round" stroke-linejoin="round"><ellipse cx="12" cy="5" rx="9" ry="3"/><path d="M3 5V19A9 3 0 0 0 21 19V5"/><path d="M3 12A9 3 0 0 0 21 12"/></svg>
<svg class="i" style="left:1337.7px;top:910.8px;width:14.6px;height:14.6px" viewBox="0 0 24 24" fill="#0a0a0a" stroke="#0a0a0a" stroke-width="2"><circle cx="12" cy="12" r="1"/><circle cx="19" cy="12" r="1"/><circle cx="5" cy="12" r="1"/></svg>
<svg class="i" style="left:1271px;top:911.9px;width:7px;height:12px" viewBox="0 0 7 12" fill="none" stroke-linecap="round" stroke-linejoin="round"><path d="M1.3 5.2 V3 A2 2 0 0 1 5.3 3 V4.2" stroke="#3a3a3a" stroke-width="1.2"/><path d="M2.9 5 V3.4 A0.6 0.6 0 0 1 4.1 3.4" stroke="#666" stroke-width="0.9"/><path d="M1.4 5.4 V7.2 A1.9 1.9 0 0 0 5.2 7.2 V4.6" stroke="#b5b5b5" stroke-width="1"/><path d="M1.8 8.8 L3.3 10.6 L4.8 8.8" stroke="#c8c8c8" stroke-width="0.9"/></svg>
<div class="hl" style="top:941px"></div>
<div class="cb" style="top:964px;left:57px"></div>
<div class="t m" style="left:84px;top:952px;font-size:13.3px;line-height:13.3px;color:#0a0a0a;">2 days ago</div>
<div class="t " style="left:84px;top:969px;font-size:11.4px;line-height:11.4px;color:#737373;">7/26/2025, 11:47:02 AM</div>
<div class="t " style="left:258.5px;top:959px;font-size:13.5px;line-height:13.5px;color:#0a0a0a;">shipping@fedex.com</div>
<div class="t " style="left:490.5px;top:959px;font-size:13.45px;line-height:13.45px;color:#0a0a0a;">Shipment Confirmation - Delivery Tomorrow</div>
<svg class="i" style="left:850px;top:958.4px;width:14.6px;height:14.6px" viewBox="0 0 24 24" fill="none" stroke="#737373" stroke-width="2" stroke-linecap="round" stroke-linejoin="round"><path d="M14 18V6a2 2 0 0 0-2-2H4a2 2 0 0 0-2 2v11a1 1 0 0 0 1 1h2"/><path d="M15 18H9"/><path d="M19 18h2a1 1 0 0 0 1-1v-3.650a1 1 0 0 0-.22-.624l-3.48-4.35A1 1 0 0 0 17.52 8H14"/><circle cx="17" cy="18" r="2"/><circle cx="7" cy="18" r="2"/></svg>
<div class="t" style="left:871px;top:959px;font-size:13.3px;line-height:13.3px;color:#0a0a0a">Shipping Confirmation<span class="pct" style="left:100%;margin-left:8px;top:-3.33px">92%</span></div>
<svg class="i" style="left:1127.8px;top:958.4px;width:14.6px;height:14.6px" viewBox="0 0 24 24" fill="none" stroke="#ca8a04" stroke-width="2" stroke-linecap="round" stroke-linejoin="round"><circle cx="12" cy="12" r="10"/><polyline points="12 6 12 12 16 14"/></svg>
<div class="t m" style="left:1149.5px;top:959px;font-size:13.3px;line-height:13.3px;color:#ca8a04;">Pending</div>
<svg class="i" style="left:1288.8px;top:958.4px;width:14.6px;height:14.6px" viewBox="0 0 24 24" fill="none" stroke="#16a34a" stroke-width="2" stroke-linecap="round" stroke-linejoin="round"><ellipse cx="12" cy="5" rx="9" ry="3"/><path d="M3 5V19A9 3 0 0 0 21 19V5"/><path d="M3 12A9 3 0 0 0 21 12"/></svg>
<svg class="i" style="left:1337.7px;top:958.4px;width:14.6px;height:14.6px" viewBox="0 0 24 24" fill="#0a0a0a" stroke="#0a0a0a" stroke-width="2"><circle cx="12" cy="12" r="1"/><circle cx="19" cy="12" r="1"/><circle cx="5" cy="12" r="1"/></svg>
<svg class="i" style="left:1271px;top:959.5px;width:7px;height:12px" viewBox="0 0 7 12" fill="none" stroke-linecap="round" stroke-linejoin="round"><path d="M1.3 5.2 V3 A2 2 0 0 1 5.3 3 V4.2" stroke="#3a3a3a" stroke-width="1.2"/><path d="M2.9 5 V3.4 A0.6 0.6 0 0 1 4.1 3.4" stroke="#666" stroke-width="0.9"/><path d="M1.4 5.4 V7.2 A1.9 1.9 0 0 0 5.2 7.2 V4.6" stroke="#b5b5b5" stroke-width="1"/><path d="M1.8 8.8 L3.3 10.6 L4.8 8.8" stroke="#c8c8c8" stroke-width="0.9"/></svg>
<div class="hl" style="top:989px"></div>
<div class="cb" style="top:1011px;left:57px"></div>
<div class="t m" style="left:84px;top:1000px;font-size:13.3px;line-height:13.3px;color:#0a0a0a;">2 days ago</div>
<div class="t " style="left:84px;top:1017px;font-size:11.4px;line-height:11.4px;color:#737373;">7/26/2025, 9:13:02 AM</div>
<div class="t " style="left:258.5px;top:1007px;font-size:13.5px;line-height:13.5px;color:#0a0a0a;">orders@supplier.com</div>
<div class="t " style="left:490.5px;top:1007px;font-size:13.45px;line-height:13.45px;color:#0a0a0a;">Invoice #INV-2025-001</div>
<svg class="i" style="left:850px;top:1006.0px;width:14.6px;height:14.6px" viewBox="0 0 24 24" fill="none" stroke="#737373" stroke-width="2" stroke-linecap="round" stroke-linejoin="round"><path d="M15 2H6a2 2 0 0 0-2 2v16a2 2 0 0 0 2 2h12a2 2 0 0 0 2-2V7Z"/><path d="M14 2v4a2 2 0 0 0 2 2h4"/><path d="M10 9H8"/><path d="M16 13H8"/><path d="M16 17H8"/></svg>
<div class="t" style="left:871px;top:1007px;font-size:13.3px;line-height:13.3px;color:#0a0a0a">Invoice<span class="pct" style="left:100%;margin-left:8px;top:-3.75px">90%</span></div>
<svg class="i" style="left:1127.8px;top:1006.0px;width:14.6px;height:14.6px" viewBox="0 0 24 24" fill="none" stroke="#16a34a" stroke-width="2" stroke-linecap="round" stroke-linejoin="round"><path d="M21.801 10A10 10 0 1 1 17 3.335"/><path d="m9 11 3 3L22 4"/></svg>
<div class="t m" style="left:1149.5px;top:1007px;font-size:13.3px;line-height:13.3px;color:#16a34a;">Approved</div>
<svg class="i" style="left:1288.8px;top:1006.0px;width:14.6px;height:14.6px" viewBox="0 0 24 24" fill="none" stroke="#16a34a" stroke-width="2" stroke-linecap="round" stroke-linejoin="round"><ellipse cx="12" cy="5" rx="9" ry="3"/><path d="M3 5V19A9 3 0 0 0 21 19V5"/><path d="M3 12A9 3 0 0 0 21 12"/></svg>
<svg class="i" style="left:1337.7px;top:1006.0px;width:14.6px;height:14.6px" viewBox="0 0 24 24" fill="#0a0a0a" stroke="#0a0a0a" stroke-width="2"><circle cx="12" cy="12" r="1"/><circle cx="19" cy="12" r="1"/><circle cx="5" cy="12" r="1"/></svg>
<svg class="i" style="left:1271px;top:1007.0px;width:7px;height:12px" viewBox="0 0 7 12" fill="none" stroke-linecap="round" stroke-linejoin="round"><path d="M1.3 5.2 V3 A2 2 0 0 1 5.3 3 V4.2" stroke="#3a3a3a" stroke-width="1.2"/><path d="M2.9 5 V3.4 A0.6 0.6 0 0 1 4.1 3.4" stroke="#666" stroke-width="0.9"/><path d="M1.4 5.4 V7.2 A1.9 1.9 0 0 0 5.2 7.2 V4.6" stroke="#b5b5b5" stroke-width="1"/><path d="M1.8 8.8 L3.3 10.6 L4.8 8.8" stroke="#c8c8c8" stroke-width="0.9"/></svg>
<div class="hl" style="top:1037px"></div>
</div></body></html>
